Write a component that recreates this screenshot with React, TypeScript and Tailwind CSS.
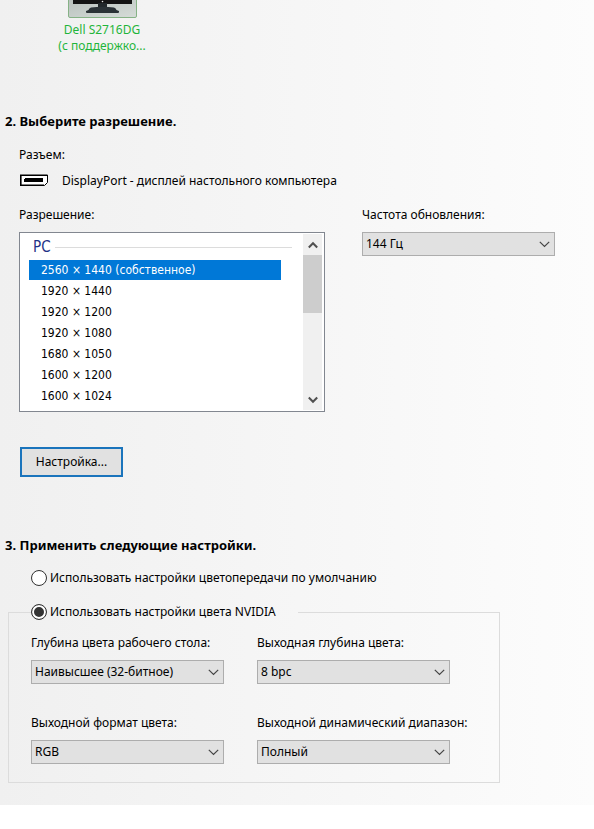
import { useState } from 'react';
import { clsx } from 'clsx';

const resolutions = [
  '2560 × 1440 (собственное)',
  '1920 × 1440',
  '1920 × 1200',
  '1920 × 1080',
  '1680 × 1050',
  '1600 × 1200',
  '1600 × 1024',
];

interface SelectFieldProps {
  id: string;
  label: string;
  options: string[];
}

function SelectField({ id, label, options }: SelectFieldProps) {
  return (
    <div className="flex w-[193px] flex-col gap-[9px]">
      <label htmlFor={id} className="whitespace-nowrap">{label}</label>
      <div className="grid items-center">
        <select
          id={id}
          className="col-start-1 row-start-1 h-6 w-full appearance-none border border-[#adadad] bg-[#e1e1e1] pl-[3px] pr-6"
        >
          {options.map((option) => (
            <option key={option}>{option}</option>
          ))}
        </select>
        <svg
          viewBox="0 0 11 7"
          className="pointer-events-none col-start-1 row-start-1 mr-[5px] h-[7px] w-[11px] justify-self-end"
          fill="none"
          stroke="#444"
          strokeWidth="1.200"
        >
          <path d="M.8.8 5.500 5.500 10.200.8" />
        </svg>
      </div>
    </div>
  );
}

interface RadioOptionProps {
  label: string;
  value: string;
  selected: string;
  onSelect: (value: string) => void;
}

function RadioOption({ label, value, selected, onSelect }: RadioOptionProps) {
  return (
    <label className="flex items-center gap-[3px]">
      <input
        type="radio"
        name="color-mode"
        value={value}
        checked={selected === value}
        onChange={() => onSelect(value)}
        className="size-4 appearance-none rounded-full border border-[#333] bg-white bg-clip-padding checked:bg-[#333] checked:shadow-[inset_0_0_0_2px_#fff]"
      />
      <span className="whitespace-nowrap">{label}</span>
    </label>
  );
}

function MonitorPreview() {
  return (
    <svg viewBox="0 0 69 18" className="h-[18px] w-[69px]">
      <defs>
        <linearGradient id="card" x1="0" y1="0" x2="1" y2="1">
          <stop offset="0" stopColor="#b9c1bd" />
          <stop offset="1" stopColor="#d5dcd8" />
        </linearGradient>
      </defs>
      <path d="M.5-1V16q0 1.500 1.500 1.500H67q1.500 0 1.500-1.500V-1" fill="url(#card)" stroke="#86b286" />
      <path d="M5 0H64V4H5z" fill="#141414" />
      <path d="M30 3H39V8H30z" fill="#22282b" />
      <path d="M23 7.500Q34.500 6 46 7.500Q48 8 48.500 10L51 11Q51.500 13 50 13H19Q17.500 13 18 11L20.500 10Q21 8 23 7.500Z" fill="#2a3236" />
      <circle cx="34.500" cy="1.500" r=".8" fill="#e8e8e8" />
    </svg>
  );
}

function ResolutionList() {
  const [active, setActive] = useState(0);

  return (
    <div className="flex h-[180px] w-[306px] border border-[#828790] bg-white p-px font-['DejaVu_Sans_Condensed','DejaVu_Sans',sans-serif]">
      <div className="flex-1 overflow-hidden pl-2">
        <div className="flex h-[26px] items-center gap-1 pl-1 pr-[11px]">
          <span className="text-[15px] text-[#1e3287]">PC</span>
          <span className="h-px flex-1 bg-[#dcdcdc]" />
        </div>
        <ul role="listbox" aria-label="Разрешение" className="mr-[22px] flex flex-col gap-px">
          {resolutions.map((resolution, index) => (
            <li
              key={resolution}
              role="option"
              aria-selected={index === active}
              onClick={() => setActive(index)}
              className={clsx('h-5 pl-3 leading-5', index === active && 'bg-[#0078d7] text-white')}
            >
              {resolution}
            </li>
          ))}
        </ul>
      </div>
      <div className="mr-px flex w-[19px] flex-col bg-[#f0f0f0]">
        <button type="button" aria-label="Вверх" className="flex h-[21px] items-center justify-center">
          <svg viewBox="0 0 10 8" className="h-2 w-[10px]" fill="none" stroke="#505050" strokeWidth="2">
            <path d="M.8 6.500 5 2.200 9.200 6.500" />
          </svg>
        </button>
        <div className="h-[58px] bg-[#cdcdcd]" />
        <button type="button" aria-label="Вниз" className="mt-auto flex h-[21px] items-center justify-center">
          <svg viewBox="0 0 10 8" className="h-2 w-[10px]" fill="none" stroke="#505050" strokeWidth="2">
            <path d="M.8 1.500 5 5.800 9.200 1.500" />
          </svg>
        </button>
      </div>
    </div>
  );
}

export default function App() {
  const [colorMode, setColorMode] = useState('nvidia');

  return (
    <div className="min-h-screen bg-white font-['Noto_Sans','DejaVu_Sans',sans-serif] text-[12px] leading-4 text-black">
      <main className="bg-linear-to-r from-[#f0f0f0] to-[#fcfcfc] pb-[22px]">
        <div className="ml-[47px] flex w-[110px] flex-col items-center text-center text-[#1fb53a]">
          <MonitorPreview />
          <p className="mt-1 whitespace-nowrap">
            Dell S2716DG
            <br />
            (с поддержко...
          </p>
        </div>

        <section className="mt-[59px]">
          <h2 className="pl-[5px] text-[13px] font-bold leading-4">2. Выберите разрешение.</h2>
          <div className="pl-[19px]">
            <p className="mt-[18px]">Разъем:</p>
            <div className="mt-[10px] flex items-center gap-[14px]">
              <svg viewBox="0 0 29 14" className="h-[14px] w-[29px]">
                <path d="M1.500 1H28.500V9L25.500 11.500H1.500z" fill="#fff" />
                <path d="M28.500 1V8.500L25.500 11.500H22" fill="none" stroke="#000" />
                <path d="M28.500 1.200H1.800V11.200H25" fill="none" stroke="#000" strokeWidth="1.600" />
                <path d="M6 4H24V8H5V5H6z" fill="#000" />
              </svg>
              <span>DisplayPort - дисплей настольного компьютера</span>
            </div>
            <div className="mt-[18px] flex flex-wrap items-start gap-x-[37px] gap-y-4">
              <div className="flex flex-col gap-[9px]">
                <span>Разрешение:</span>
                <ResolutionList />
              </div>
              <SelectField id="refresh" label="Частота обновления:" options={['144 Гц', '120 Гц', '60 Гц']} />
            </div>
            <button
              type="button"
              className="ml-px mt-[35px] h-[30px] w-[103px] border-2 border-[#1a74bc] bg-[#e1e1e1]"
            >
              Настройка...
            </button>
          </div>
        </section>

        <section className="mt-[60px]">
          <h2 className="pl-[5px] text-[13px] font-bold leading-4">3. Применить следующие настройки.</h2>
          <div className="mt-[17px] pl-[31px]">
            <RadioOption
              label="Использовать настройки цветопередачи по умолчанию"
              value="default"
              selected={colorMode}
              onSelect={setColorMode}
            />
          </div>
          <fieldset className="ml-2 mr-4 mt-[18px] max-w-[492px] border border-[#dcdcdc] px-[22px] pb-[18px]">
            <legend className="pr-[22px]">
              <RadioOption
                label="Использовать настройки цвета NVIDIA"
                value="nvidia"
                selected={colorMode}
                onSelect={setColorMode}
              />
            </legend>
            <div className="mt-[15px] flex flex-wrap gap-x-[33px] gap-y-[31px]">
              <SelectField
                id="desktop-depth"
                label="Глубина цвета рабочего стола:"
                options={['Наивысшее (32-битное)', 'Среднее (16-битное)']}
              />
              <SelectField id="output-depth" label="Выходная глубина цвета:" options={['8 bpc', '10 bpc']} />
              <SelectField id="output-format" label="Выходной формат цвета:" options={['RGB', 'YCbCr422', 'YCbCr444']} />
              <SelectField
                id="dynamic-range"
                label="Выходной динамический диапазон:"
                options={['Полный', 'Ограниченный']}
              />
            </div>
          </fieldset>
        </section>
      </main>
    </div>
  );
}
